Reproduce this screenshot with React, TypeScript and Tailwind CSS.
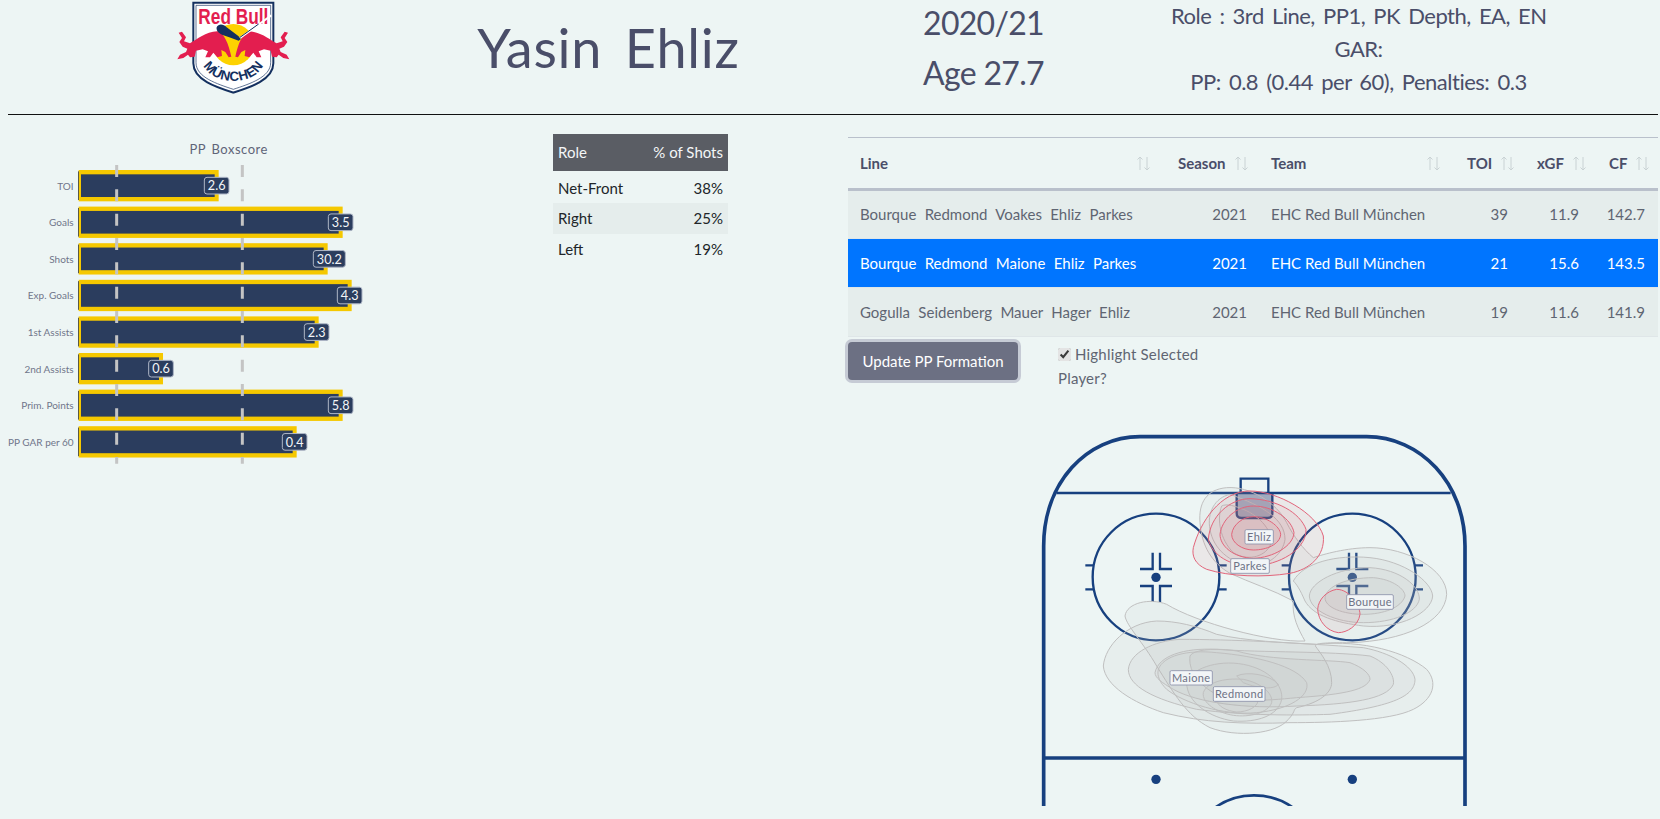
import React from "react"

// bar rows of the PP boxscore, end = right edge of the bar in chart units (3 units = 1px)
const bars = [
  { label: "TOI", value: "2.6", end: 656 },
  { label: "Goals", value: "3.5", end: 1028 },
  { label: "Shots", value: "30.2", end: 983 },
  { label: "Exp. Goals", value: "4.3", end: 1055 },
  { label: "1st Assists", value: "2.3", end: 956 },
  { label: "2nd Assists", value: "0.6", end: 489 },
  { label: "Prim. Points", value: "5.8", end: 1028 },
  { label: "PP GAR per 60", value: "0.4", end: 890 },
]

const roles = [
  { role: "Net-Front", pct: "38%", shade: false },
  { role: "Right", pct: "25%", shade: true },
  { role: "Left", pct: "19%", shade: false },
]

const lines = [
  { line: "Bourque Redmond Voakes Ehliz Parkes", toi: "39", xgf: "11.9", cf: "142.7", active: false },
  { line: "Bourque Redmond Maione Ehliz Parkes", toi: "21", xgf: "15.6", cf: "143.5", active: true },
  { line: "Gogulla Seidenberg Mauer Hager Ehliz", toi: "19", xgf: "11.6", cf: "141.9", active: false },
]

const FONT = "Lato, 'Noto Sans', sans-serif"

function Logo() {
  const bull =
    "M52 178 L60 164 L78 156 L82 146 L68 140 L58 126 L66 114 L56 98 L66 95 L78 112 L72 124 L90 130 C112 118 136 96 172 94 C192 98 206 132 214 170 L206 172 L196 156 L184 150 L186 168 L172 172 L160 158 L150 172 L136 172 L144 154 L128 148 L108 152 L104 170 L90 172 L84 164 L70 174 Z"
  return (
    <svg viewBox="0 0 420 300" className="w-[140px] h-[100px] mr-[7px]">
      <path d="M100 8 H340 V190 C340 240 270 262 220 278 C170 262 100 240 100 190 Z" fill="#fff" stroke="#14305f" strokeWidth="6" />
      <path d="M108 16 H332 V188 C332 232 268 252 220 268 C172 252 108 232 108 188 Z" fill="#fff" stroke="#14305f" strokeWidth="2" />
      <circle cx="220" cy="134" r="62" fill="#fdd200" />
      <text x="220" y="72" textAnchor="middle" fontFamily="'Liberation Sans', sans-serif" fontWeight="700" fontSize="64" fill="#e31e4f" textLength="210" lengthAdjust="spacingAndGlyphs">Red Bull</text>
      <path d={bull} fill="#e31e4f" />
      <path d={bull} fill="#e31e4f" transform="matrix(-1 0 0 1 440 0)" />
      <path d="M170 82 C176 70 190 72 200 82 L232 106 L244 116 L236 122 L214 114 L186 104 C176 100 168 92 170 82 Z" fill="#14305f" />
      <path d="M240 114 L334 46" stroke="#fff" strokeWidth="6" />
      <path d="M240 112 L296 72" stroke="#14305f" strokeWidth="3" />
      <path id="logo-arc" d="M126 186 C150 262 290 262 314 186" fill="none" />
      <text fontFamily="'Liberation Sans', sans-serif" fontWeight="700" fontSize="40" fill="#14305f">
        <textPath href="#logo-arc" startOffset="50%" textAnchor="middle" textLength="212" lengthAdjust="spacing">MÜNCHEN</textPath>
      </text>
    </svg>
  )
}

function BoxscoreChart() {
  return (
    <svg viewBox="0 0 1200 1050" className="w-[400px] h-[350px] shrink-0" fontFamily={FONT}>
      <text x="686" y="88" textAnchor="middle" fontSize="39" letterSpacing="1.5" wordSpacing="6" fill="#5f6478">PP Boxscore</text>
      {bars.map((b, i) => {
        const top = 135 + i * 109.8
        return (
          <g key={b.label}>
            <text x="221" y={top + 59} textAnchor="end" fontSize="30" fill="#70758a">{b.label}</text>
            <rect x="236" y={top} width={b.end - 236} height="94" fill="#f5c800" />
            <rect x="243" y={top + 13} width={b.end - 255} height="68" fill="#2b3d5e" />
            <rect x="234" y={top + 4} width="3" height="86" fill="#5b5a45" />
          </g>
        )
      })}
      <path d="M350 120 V1016 M727 120 V1016" stroke="#c4c4c4" strokeWidth="9" strokeDasharray="36 37" />
      {bars.map((b, i) => {
        const top = 135 + i * 109.8
        const w = b.value.length > 3 ? 96 : 74
        return (
          <g key={b.label + "-tag"}>
            <rect x={b.end - 43} y={top + 22} width={w} height="50" rx="8" fill="#2b3d5e" stroke="#aeb6c6" strokeWidth="3" />
            <text x={b.end - 43 + w / 2} y={top + 61} textAnchor="middle" fontSize="38" fill="#f3f5f7">{b.value}</text>
          </g>
        )
      })}
    </svg>
  )
}

function RinkTag({ x, y, w, h, text }: { x: number; y: number; w: number; h: number; text: string }) {
  return (
    <g>
      <rect x={x} y={y} width={w} height={h} rx="4" fill="#f2f5f7" stroke="#8b90aa" strokeWidth="2.5" />
      <text x={x + w / 2} y={y + h / 2 + 11} textAnchor="middle" fontSize="33" letterSpacing="1" fill="#6d7285">{text}</text>
    </g>
  )
}

function Circle({ cx }: { cx: number }) {
  return (
    <g>
      <path
        d={`M${cx - 48} 429 H${cx - 10} V380 M${cx + 48} 429 H${cx + 12} V380 M${cx - 48} 480 H${cx - 10} V528 M${cx + 48} 480 H${cx + 12} V528 M${cx - 212} 418 H${cx - 188} M${cx - 212} 490 H${cx - 188} M${cx + 188} 418 H${cx + 212} M${cx + 188} 490 H${cx + 212}`}
        fill="none"
      />
      <circle cx={cx} cy="454" r="14" fill="#17407f" stroke="none" />
    </g>
  )
}

// offensive zone with the shot contours, drawn in 3x units
function Rink() {
  return (
    <svg viewBox="0 0 1350 1140" className="w-[450px] h-[380px] block" fontFamily={FONT}>
      <g fill="none" stroke="#17407f">
        <path d="M41 1140 V360 C41 170 170 32 330 32 H1010 C1170 32 1305 170 1305 360 V1140" strokeWidth="11" />
        <path d="M80 201 H1262" strokeWidth="7" />
        <path d="M41 996 H1305" strokeWidth="11" />
        <path d="M632 201 V158 H715 V201" strokeWidth="7" />
        <path d="M620 201 V262 Q620 276 634 276 H713 Q727 276 727 262 V201" fill="#17407f" fillOpacity="0.38" strokeWidth="7" />
        <g strokeWidth="7">
          <circle cx="378" cy="453" r="190" />
          <circle cx="967" cy="453" r="190" />
          <Circle cx={378} />
          <Circle cx={967} />
        </g>
        <circle cx="378" cy="1060" r="14" fill="#17407f" stroke="none" />
        <circle cx="967" cy="1060" r="14" fill="#17407f" stroke="none" />
        <circle cx="672" cy="1310" r="202" strokeWidth="8" />
      </g>

      {/* gray contours, other players */}
      <g fill="#b9b9b9" fillOpacity="0.11" stroke="#c0c0c0" strokeWidth="3">
        <path d="M590 185 C530 190 505 230 510 290 C515 360 545 410 600 442 C660 470 730 492 790 525 C785 570 805 610 825 645 C720 650 500 590 410 535 C360 515 290 530 285 570 C290 600 340 650 380 720 C430 800 470 870 540 905 C620 935 740 925 775 880 C795 860 790 850 800 845 C870 830 905 800 905 770 C905 720 870 680 856 660 C856 650 900 650 960 650 C1120 645 1245 590 1250 505 C1250 430 1130 365 1020 365 C950 365 880 385 850 395 C820 370 790 330 770 290 C740 230 660 180 590 185 Z" fillOpacity="0.1" />
        <path d="M220 720 C225 660 290 590 380 585 C440 585 500 600 560 625 C650 645 760 650 860 655 C1000 640 1130 680 1190 730 C1225 770 1210 820 1150 850 C1080 885 900 890 780 890 C640 895 520 890 400 860 C310 830 225 780 220 720 Z" />
        <path d="M295 730 C300 680 370 645 450 640 C600 640 800 650 1000 665 C1080 680 1150 720 1155 760 C1155 810 1090 840 900 865 C800 868 650 870 500 850 C370 820 295 780 295 730 Z" />
        <path d="M375 740 C385 690 460 665 560 670 C700 680 900 675 1020 690 C1070 710 1095 750 1090 775 C1070 820 960 835 800 840 C650 850 500 830 430 790 C395 770 375 755 375 740 Z" />
        <path d="M480 690 C490 670 560 665 620 675 C720 705 900 700 960 710 C1000 725 1020 745 1020 760 C1010 790 950 805 800 815 C700 825 620 830 550 800 C500 770 475 730 480 690 Z" />
        <path d="M385 730 C400 690 470 670 560 680 C680 690 800 720 830 770 C840 810 780 850 680 860 C580 870 460 830 410 790 C390 770 380 750 385 730 Z" fillOpacity="0.04" />
        <path d="M470 770 C480 730 560 700 640 715 C720 730 760 780 755 820 C745 870 680 890 610 885 C540 875 470 830 470 770 Z" fillOpacity="0.05" />
        <path d="M520 800 C530 770 580 755 640 760 C690 770 730 800 725 830 C715 860 660 875 610 868 C560 860 515 830 520 800 Z" fillOpacity="0.05" />
        <path d="M620 750 C650 735 720 745 745 775 C735 790 690 790 640 770 Z" fillOpacity="0.05" />
        <path d="M560 820 C580 800 640 800 680 815 C695 835 660 858 620 858 C590 855 560 840 560 820 Z" fillOpacity="0.05" />

        <path d="M790 465 C820 410 920 385 1020 395 C1120 405 1205 465 1208 510 C1205 560 1110 610 1000 600 C920 590 850 570 825 525 C810 490 800 475 790 465 Z" />
        <path d="M838 510 C840 470 920 425 1020 425 C1110 430 1170 480 1168 520 C1160 560 1090 590 1000 590 C920 590 840 555 838 510 Z" />
        <path d="M885 515 C890 480 950 455 1030 455 C1090 460 1125 490 1125 510 C1115 545 1060 565 1000 565 C940 565 885 545 885 515 Z" />

        <path d="M600 205 C555 215 530 260 540 310 C550 370 600 410 660 420 C720 420 760 380 765 340 C765 280 700 240 600 205 Z" fillOpacity="0.04" />
        <path d="M575 240 C560 280 570 340 610 380 C650 405 700 395 720 360 C735 320 690 270 640 250 C615 240 590 232 575 240 Z" fillOpacity="0.04" />
      </g>

      {/* red contours, selected player */}
      <g fill="#c9566a" fillOpacity="0.08" stroke="#e2647a" strokeWidth="3">
        <path d="M660 195 C740 195 860 260 880 330 C885 390 840 430 780 442 C700 455 600 452 530 430 C495 415 485 390 490 365 C510 290 570 195 660 195 Z" />
        <path d="M660 218 C740 220 810 260 828 310 C830 360 770 410 680 420 C600 425 545 385 535 340 C540 270 600 218 660 218 Z" />
        <path d="M670 240 C730 240 785 280 792 320 C790 360 730 395 670 397 C610 395 570 360 570 325 C575 280 620 240 670 240 Z" />
        <path d="M670 272 C710 272 750 300 752 325 C750 355 710 372 670 372 C635 372 605 350 605 325 C608 295 640 272 670 272 Z" />
        <path d="M920 490 C960 490 990 540 990 565 C985 600 950 620 925 620 C890 615 865 585 863 550 C865 520 890 495 920 490 Z" />
      </g>

      <RinkTag x={645} y={311} w={85} h={43} text="Ehliz" />
      <RinkTag x={602} y={398} w={116} h={44} text="Parkes" />
      <RinkTag x={950} y={506} w={140} h={44} text="Bourque" />
      <RinkTag x={420} y={734} w={127} h={43} text="Maione" />
      <RinkTag x={550} y={782} w={155} h={44} text="Redmond" />
    </svg>
  )
}

function SortIcon() {
  return (
    <svg viewBox="0 0 15 15" className="w-[15px] h-[15px] shrink-0" fill="none" stroke="#c9d2d4" strokeWidth="1">
      <path d="M4 14 V1 M1.5 3.5 L4 1 L6.5 3.5 M11 1 V14 M8.5 11.5 L11 14 L13.5 11.5" />
    </svg>
  )
}

function Th({ label, className }: { label: string; className: string }) {
  return (
    <th className={`pl-3 font-bold text-[15px] text-left text-[#4a4e69] ${className}`}>
      <div className="flex items-center justify-between gap-2">
        <span>{label}</span>
        <SortIcon />
      </div>
    </th>
  )
}

export default function App() {
  return (
    <div className="w-[1660px] h-[819px] overflow-hidden bg-[#edf5f4] text-[#4a4e69] font-['Lato','Noto_Sans',sans-serif]">
      <header className="grid grid-cols-[repeat(4,375px)] pl-[46px] h-[114px] text-center">
        <div className="flex justify-center">
          <Logo />
        </div>
        <h1 className="text-[54px] leading-[96px] tracking-[0.75px] [word-spacing:8px]">Yasin Ehliz</h1>
        <div className="text-[32px] leading-[50px] tracking-[-0.7px] -mt-[2px]">
          <div>2020/21</div>
          <div>Age 27.7</div>
        </div>
        <div className="text-[22px] leading-[33px] tracking-[-0.5px] [word-spacing:3px] whitespace-nowrap -mt-[1px]">
          <div>Role : 3rd Line, PP1, PK Depth, EA, EN</div>
          <div>GAR:</div>
          <div>PP: 0.8 (0.44 per 60), Penalties: 0.3</div>
        </div>
      </header>
      <div className="ml-2 mr-[2px] h-px bg-[#111]" />

      <main className="flex">
        <section className="flex w-[848px] shrink-0 items-start mt-[10px]">
          <BoxscoreChart />
          <table className="ml-[153px] mt-[9px] w-[175px] text-[15px] text-[#212529] border-collapse">
            <thead>
              <tr className="h-[38px] bg-[#5a5d64] text-[#f4f6f7] border-b-[3px] border-b-[#edf5f4]">
                <th className="px-[5px] text-left font-normal">Role</th>
                <th className="px-[5px] text-right font-normal">% of Shots</th>
              </tr>
            </thead>
            <tbody>
              {roles.map((r) => (
                <tr key={r.role} className={r.shade ? "h-[31px] bg-[#e5edec]" : "h-[31px]"}>
                  <td className="px-[5px]">{r.role}</td>
                  <td className="px-[5px] text-right">{r.pct}</td>
                </tr>
              ))}
            </tbody>
          </table>
        </section>

        <section className="w-[810px] mt-[22px]">
          <table className="w-full table-fixed border-collapse text-[15px] text-[#5f6572]">
            <colgroup>
              <col className="w-[318px]" />
              <col className="w-[93px]" />
              <col className="w-[196px]" />
              <col className="w-[70px]" />
              <col className="w-[72px]" />
              <col className="w-[61px]" />
            </colgroup>
            <thead>
              <tr className="h-[52px] border-t border-t-[#b9c0cb] border-b-[3px] border-b-[#b9c0cb]">
                <Th label="Line" className="pr-[15px]" />
                <Th label="Season" className="pr-[10px]" />
                <Th label="Team" className="pr-[14px]" />
                <Th label="TOI" className="pr-[14px]" />
                <Th label="xGF" className="pr-[15px]" />
                <Th label="CF" className="pr-[8px]" />
              </tr>
            </thead>
            <tbody>
              {lines.map((l) => (
                <tr
                  key={l.line}
                  className={
                    l.active
                      ? "h-[49px] bg-[#0075ff] text-white border-b border-b-[#dfe6e8]"
                      : "h-[49px] bg-[#e5edec] border-b border-b-[#dfe6e8]"
                  }
                >
                  <td className="px-3 whitespace-nowrap [word-spacing:4.5px]">{l.line}</td>
                  <td className="px-3 text-right">2021</td>
                  <td className="px-3 whitespace-nowrap">EHC Red Bull München</td>
                  <td className="px-[17px] text-right">{l.toi}</td>
                  <td className="px-[18px] text-right">{l.xgf}</td>
                  <td className="pr-[13px] text-right">{l.cf}</td>
                </tr>
              ))}
            </tbody>
          </table>

          <div className="flex items-start mt-[5px]">
            <button className="w-[170px] h-[38px] rounded bg-[#6c7083] text-white text-[15px] ring-[3px] ring-[#c6cbd5]">
              Update PP Formation
            </button>
            <label className="ml-[40px] w-[150px] text-[15px] leading-[24px] tracking-[0.2px] text-[#5f6572]">
              <input type="checkbox" defaultChecked className="mr-[4px] w-[13px] h-[13px] accent-[#e4e4e4] align-[-1px]" />
              Highlight Selected Player?
            </label>
          </div>

          <div className="ml-[182px] mt-[36px]">
            <Rink />
          </div>
        </section>
      </main>
    </div>
  )
}
